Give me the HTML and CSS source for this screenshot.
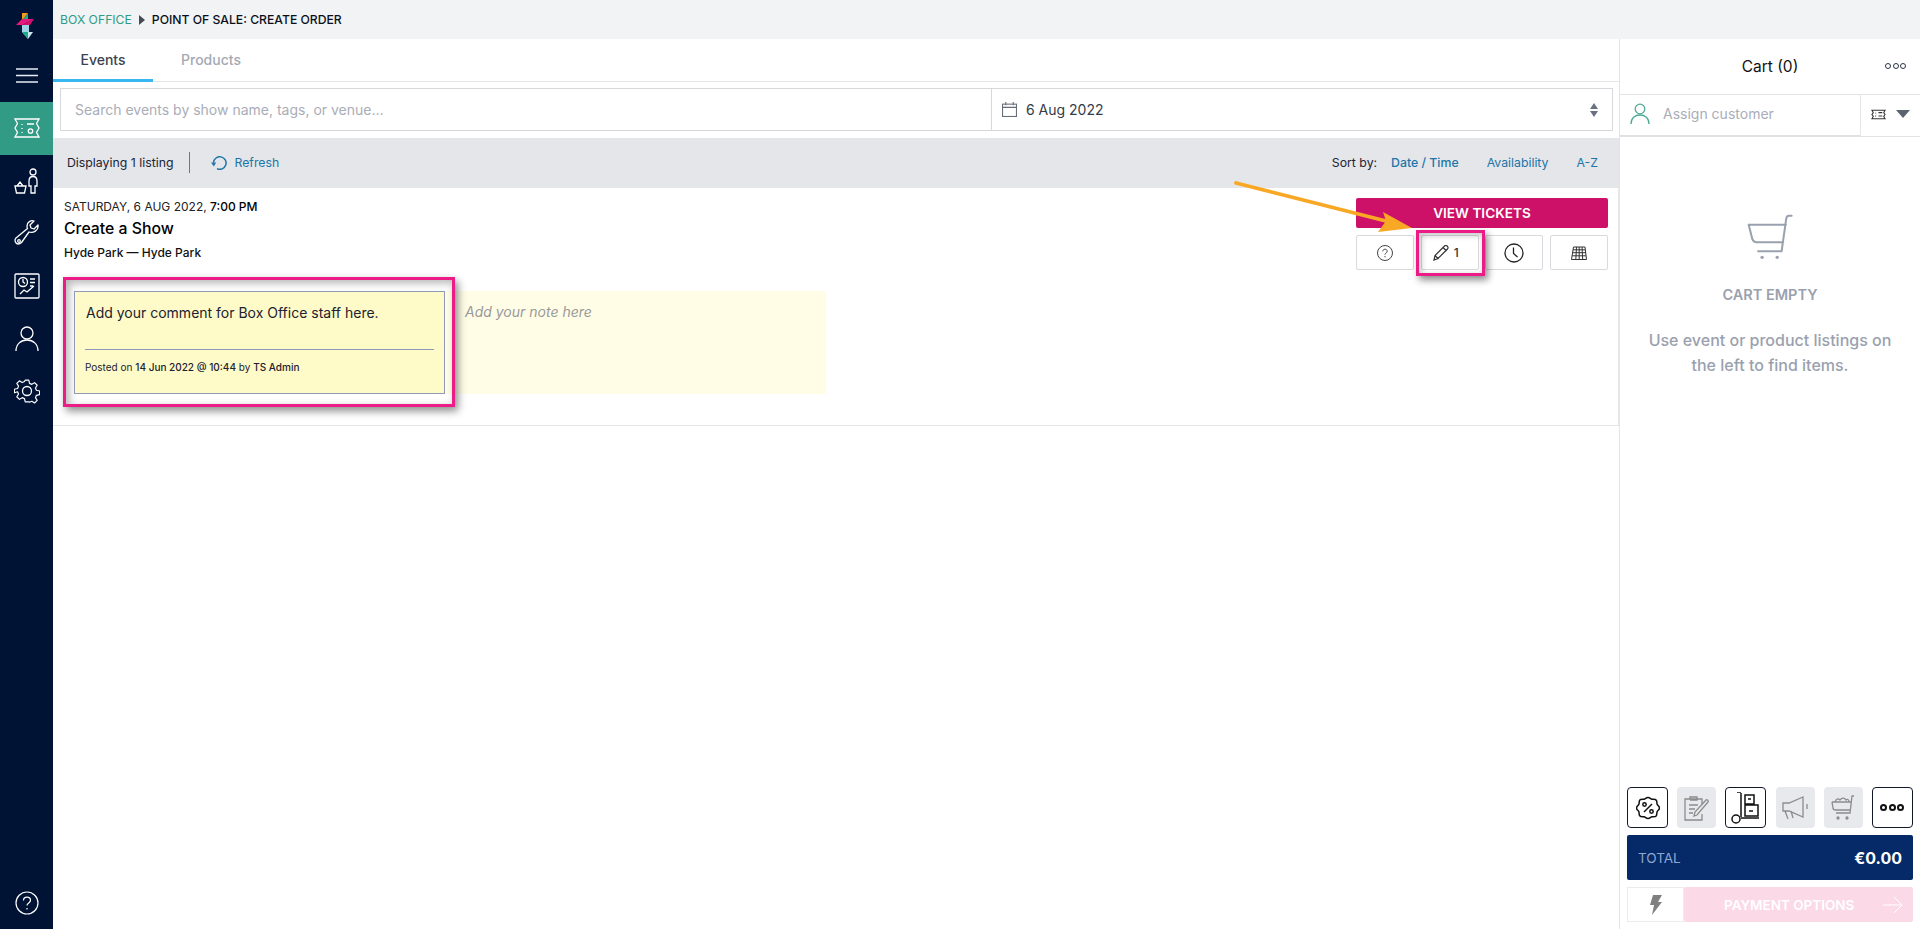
FILE: index.html
```html
<!DOCTYPE html>
<html lang="en">
<head>
<meta charset="utf-8">
<title>Point of Sale: Create Order</title>
<link rel="stylesheet" href="styles.css">
</head>
<body>
<div class="app">
  <nav class="side">
    <svg class="logo" viewBox="0 0 24 26" width="24" height="26">
      <polygon points="6,0 12,0 6,8" fill="#f59a1b"/>
      <polygon points="12,0 12,8 6,8" fill="#1fa98c"/>
      <polygon points="0,12 6,6 6,12" fill="#e8197d"/>
      <polygon points="6,6 18,6 6,12" fill="#e8197d"/>
      <polygon points="18,6 6,12 14,12" fill="#d5116f"/>
      <rect x="6" y="12" width="7" height="7" fill="#9fd3e6"/>
      <polygon points="6,19 17,19 12,26" fill="#c9e7f0"/>
      <polygon points="6,19 12,19 12,26" fill="#1fa98c"/>
    </svg>
    <svg class="burger" viewBox="0 0 22 15" width="22" height="15"><path d="M0 1h22M0 7.500h22M0 14h22" stroke="#e8edf5" stroke-width="1.400" fill="none"/></svg>
    <a class="nav-item active">
      <svg viewBox="0 0 26 20" width="26" height="20" fill="none" stroke="#fff" stroke-width="1.300"><path d="M1 1h24l-2.500 4.500 2.500 4.500-2.500 4.500 2.500 4.500H1l2.500-4.500L1 10l2.500-4.500z"/><path d="M8 6v1M8 10v1M8 14v1M13 6h7"/><circle cx="16.500" cy="13" r="2.200"/></svg>
    </a>
    <a class="nav-item">
      <svg viewBox="0 0 26 26" width="26" height="26" fill="none" stroke="#fff" stroke-width="1.300"><circle cx="19" cy="4" r="3"/><path d="M15 18v-5c0-3 2-4.500 4-4.500s4 1.500 4 4.500v5h-2v7h-4v-7zM1 18h11l-1.500 7h-8zM3 18l3-4 3 4"/></svg>
    </a>
    <a class="nav-item">
      <svg viewBox="0 0 26 26" width="26" height="26" fill="none" stroke="#fff" stroke-width="1.300" stroke-linejoin="round"><path d="M24 5l-4 4-3-1-1-3 4-4c-3-1-7 1-7 5 0 1 0 2 .500 2.500L2 18c-2 2-.5 6 2 6 1.500 0 2.500-.5 3.500-1.500L15 12c4 1.500 10-1.500 9-7z"/><circle cx="5" cy="21" r="1.300"/></svg>
    </a>
    <a class="nav-item">
      <svg viewBox="0 0 26 26" width="26" height="26" fill="none" stroke="#fff" stroke-width="1.300"><rect x="1" y="1" width="24" height="24" rx="1"/><circle cx="9" cy="9" r="4.500"/><path d="M9 6v3l2 1.500M16 6h5M16 9.500h5M16 13h3M6 21l4-4 3 2 7-6" /></svg>
    </a>
    <a class="nav-item">
      <svg viewBox="0 0 24 26" width="24" height="26" fill="none" stroke="#fff" stroke-width="1.300"><circle cx="12" cy="7" r="6"/><path d="M1 25c0-7 5-11 11-11s11 4 11 11"/></svg>
    </a>
    <a class="nav-item">
      <svg viewBox="0 0 26 26" width="26" height="26" fill="none" stroke="#fff" stroke-width="1.300" stroke-linejoin="round"><circle cx="13" cy="13" r="4.500"/><path d="M11 1h4l.8 3.500 2.600 1.100 3-1.900 2.900 2.900-1.900 3 1.100 2.600 3.500.8v4l-3.500.8-1.100 2.600 1.900 3-2.900 2.900-3-1.900-2.600 1.100L15 25h-4l-.8-3.500-2.600-1.100-3 1.900-2.900-2.900 1.900-3-1.100-2.600L-1 15v-4l3.500-.8 1.100-2.600-1.900-3 2.900-2.900 3 1.900 2.600-1.100z" transform="translate(1.300 1.300) scale(.9)"/></svg>
    </a>
    <svg class="help" viewBox="0 0 24 24" width="24" height="24" fill="none" stroke="#fff" stroke-width="1.200"><circle cx="12" cy="12" r="11"/><path d="M8.500 9.500c0-2 1.500-3.300 3.500-3.300s3.500 1.300 3.500 3.100c0 2.800-3.500 2.500-3.500 5.200M12 17v1.500"/></svg>
  </nav>

  <div class="body">
    <header class="crumbs">
      <span class="crumb-link">BOX OFFICE</span>
      <span class="crumb-caret"></span>
      <span class="crumb-here">POINT OF SALE: CREATE ORDER</span>
    </header>
    <div class="work">
      <main class="main">
        <div class="tabs">
          <div class="tab on">Events</div>
          <div class="tab">Products</div>
        </div>
        <div class="filters">
          <div class="search-box">
            <div class="search">Search events by show name, tags, or venue...</div>
            <div class="date">
              <svg viewBox="0 0 14 14" width="15" height="15" fill="none" stroke="#666d78" stroke-width="1"><rect x=".5" y="2" width="13" height="11.500"/><path d="M.5 5h13M3.500 0v3M10.500 0v3"/></svg>
              <span>6 Aug 2022</span>
              <span class="spin"><i class="up"></i><i class="down"></i></span>
            </div>
          </div>
        </div>
        <div class="toolbar">
          <span class="count">Displaying 1 listing</span>
          <span class="vbar"></span>
          <svg class="refresh" viewBox="0 0 16 16" width="16" height="16" fill="none" stroke="#1d75a8" stroke-width="1.500"><path d="M2.500 8.500A6.300 6.300 0 1 1 6 14.700"/><path d="M0 8.500h5.200L2.800 12.500z" fill="#1d75a8" stroke="none"/></svg>
          <span class="link">Refresh</span>
          <span class="sort">Sort by:</span>
          <span class="link strong">Date / Time</span>
          <span class="link">Availability</span>
          <span class="link">A-Z</span>
        </div>
        <article class="event">
          <div class="event-top">
            <div class="event-info">
              <div class="when">SATURDAY, 6 AUG 2022, <b>7:00 PM</b></div>
              <h2 class="title">Create a Show</h2>
              <div class="venue">Hyde Park — Hyde Park</div>
            </div>
            <div class="actions">
              <button class="view">VIEW TICKETS</button>
              <div class="mini-row">
                <button class="mini">
                  <svg viewBox="0 0 16 16" width="16" height="16" fill="none" stroke="#444" stroke-width="1"><circle cx="8" cy="8" r="7.500"/><path d="M5.800 6.300c0-1.300 1-2.100 2.200-2.100s2.200.8 2.200 2c0 1.800-2.200 1.600-2.200 3.400M8 11v1.300"/></svg>
                </button>
                <button class="mini marked">
                  <svg viewBox="0 0 16 16" width="16" height="16" fill="none" stroke="#333" stroke-width="1.200"><path d="M1 15l1-4.500L11.500 1c1-.8 2-.6 2.800.2s1 1.800.2 2.800L5 13.500zM2 10.500L5.500 14M10 2.500L13.500 6"/></svg>
                  <span>1</span>
                </button>
                <button class="mini">
                  <svg viewBox="0 0 20 20" width="20" height="20" fill="none" stroke="#222" stroke-width="1.300"><circle cx="10" cy="10" r="9"/><path d="M9.500 4.500v6l4 3.500"/></svg>
                </button>
                <button class="mini">
                  <svg viewBox="0 0 16 14" width="16" height="14" fill="none" stroke="#333" stroke-width="1"><path d="M2.500 1h11.500l1.500 12.500H.5zM2 3.800h12.500M1.600 6.700h13.200M1.200 9.800h13.900M5.500 1l-.7 12.500M8.200 1v12.500M11 1l.7 12.500"/></svg>
                </button>
              </div>
            </div>
          </div>
          <div class="notes">
            <div class="comment">
              <p class="comment-text">Add your comment for Box Office staff here.</p>
              <div class="comment-meta">Posted on <b>14 Jun 2022 @ 10:44</b> by <b>TS Admin</b></div>
            </div>
            <div class="note">Add your note here</div>
          </div>
          <div class="mark mark-comment"></div>
        </article>
      </main>

      <aside class="cart">
        <div class="cart-head">
          <span>Cart (0)</span>
          <span class="dots"><i></i><i></i><i></i></span>
        </div>
        <div class="assign">
          <div class="assign-name">
            <svg viewBox="0 0 20 21" width="20" height="21" fill="none" stroke="#4fa996" stroke-width="1.300"><circle cx="10" cy="6" r="4.800"/><path d="M1 21c0-6 4-9 9-9s9 3 9 9"/></svg>
            <span>Assign customer</span>
          </div>
          <div class="assign-type">
            <svg viewBox="0 0 16 11" width="15" height="11" fill="none" stroke="#333" stroke-width="1.100"><path d="M1 1h14l-1.500 2.500L15 5.500l-1.500 2L15 10H1l1.500-2.500L1 5.500l1.500-2z"/><path d="M5 3.500v1M5 6.500v1M8 3.500h4M8 7h4"/></svg>
            <i class="caret-down"></i>
          </div>
        </div>
        <div class="empty">
          <svg viewBox="200 70 140 140" width="47" height="47" fill="none" stroke="#9aa1ae" stroke-width="6" stroke-linecap="round" stroke-linejoin="round"><path d="M333 78h-8c-5 0-7 3-8 8L303 184H233M205 105H316M205 105l11 43c2 6 6 9 12 9h80"/><circle cx="245" cy="202" r="5" fill="#9aa1ae" stroke="none"/><circle cx="290" cy="202" r="5" fill="#9aa1ae" stroke="none"/></svg>
          <h3>CART EMPTY</h3>
          <p>Use event or product listings on the left to find items.</p>
        </div>
        <div class="tools">
          <button class="tool live">
            <svg viewBox="0 0 24 24" width="24" height="24" fill="none" stroke="#111" stroke-width="1.500"><path d="M12 1.500c2 0 2.500 1.500 4 1.700s3.200-.4 4.300 1 .2 2.800.9 4.200 2.300 1.700 2.300 3.600-1.600 2.200-2.300 3.600-.1 2.900-.9 4.200-2.800.8-4.300 1S14 22.500 12 22.500s-2.500-1.500-4-1.700-3.200.4-4.300-1-.2-2.800-.9-4.200S.5 13.900.5 12s1.600-2.200 2.300-3.600.1-2.900.9-4.200 2.800-.8 4.300-1S10 1.500 12 1.500z"/><path d="M16 8l-8 8"/><circle cx="8.500" cy="8.500" r="1.700"/><circle cx="15.500" cy="15.500" r="1.700"/></svg>
          </button>
          <button class="tool off">
            <svg viewBox="0 0 26 26" width="26" height="26" fill="none" stroke="#8c8c8c" stroke-width="1.300"><path d="M18 10V4H1v21h17v-6M6 4V2h7v3H6M5 10h9M5 14h6M5 18h4M10 21l1-4L22 5c1-1 3 1 2 2L13 20z"/></svg>
          </button>
          <button class="tool live">
            <svg viewBox="0 0 30 32" width="30" height="32" fill="none" stroke="#111" stroke-width="1.500"><path d="M10 1v24M10 26h18M6 0h4"/><circle cx="5" cy="27" r="4"/><path d="M14 3h9v9h-9zM14 13h13v11H14z"/><path d="M17 7h3M18 19h4"/></svg>
          </button>
          <button class="tool off">
            <svg viewBox="0 0 28 24" width="28" height="24" fill="none" stroke="#8c8c8c" stroke-width="1.300"><path d="M22 1L8 7H2v8h6l14 6zM4 15l3 8M10 15l2 7M26 8v5"/></svg>
          </button>
          <button class="tool off">
            <svg viewBox="0 0 24 26" width="24" height="26" fill="none" stroke="#8c8c8c" stroke-width="1.300"><path d="M23 1h-2l-2 17H5M1 7h19M1 7l1 6c0 2 2 2 3 2h14M4 7c1-3 3-4 5-2 2-3 5-2 6 0 1-1 3-1 3 2"/><circle cx="7" cy="23" r="1" fill="#8c8c8c"/><circle cx="16" cy="23" r="1" fill="#8c8c8c"/></svg>
          </button>
          <button class="tool live">
            <span class="dots big"><i></i><i></i><i></i></span>
          </button>
        </div>
        <div class="total"><span>TOTAL</span><b>€0.00</b></div>
        <div class="pay-row">
          <div class="flash">
            <svg viewBox="0 0 12 20" width="12" height="20"><path d="M3 0h9L8 7h4L2 20l2-10H0z" fill="#808080"/></svg>
          </div>
          <button class="pay">
            <span>PAYMENT OPTIONS</span>
            <svg viewBox="0 0 20 18" width="20" height="18" fill="none" stroke="#fff" stroke-width="1"><path d="M0 9h19M11 1l8 8-8 8"/></svg>
          </button>
        </div>
      </aside>
    </div>
  </div>
  <svg class="pointer" viewBox="0 0 200 70" width="200" height="70" fill="#f9a825">
    <path d="M2 5L152 43" stroke="#f9a825" stroke-width="3.800" stroke-linecap="round"/>
    <path d="M178 50L144 54 152 43 149 34z"/>
  </svg>
</div>
</body>
</html>
```
FILE: styles.css
```css
* { box-sizing: border-box; }
html, body { margin: 0; height: 100%; }
body { font-family: Inter, "Liberation Sans", sans-serif; color: #111; background: #fff; overflow: hidden; }
button { font-family: inherit; cursor: pointer; }

.app { position: relative; display: flex; height: 929px; }

.side { width: 53px; flex: none; background: #001335; display: flex; flex-direction: column; align-items: center; padding-top: 13px; }
.logo { display: block; margin-left: 3px; }
.burger { display: block; margin-top: 29px; margin-bottom: 19px; }
.nav-item { width: 100%; height: 52.600px; display: flex; align-items: center; justify-content: center; flex: none; }
.nav-item.active { background: #329b85; }
.help { margin-top: auto; margin-bottom: 14px; }

.body { flex: 1; min-width: 0; display: flex; flex-direction: column; }
.crumbs { height: 39px; flex: none; background: #f1f3f5; display: flex; align-items: center; padding-left: 7px; font-size: 12.200px; }
.crumb-link { color: #2f9b85; }
.crumb-caret { width: 0; height: 0; border-left: 6px solid #444b57; border-top: 5px solid transparent; border-bottom: 5px solid transparent; margin: 0 7px 0 7px; }
.crumb-here { font-weight: 500; color: #0b0f1a; }

.work { flex: 1; min-height: 0; display: flex; }
.main { flex: 1; min-width: 0; display: flex; flex-direction: column; }

.tabs { height: 43px; flex: none; display: flex; border-bottom: 1px solid #e5e7ea; }
.tab { width: 100px; padding-top: 12px; text-align: center; font-size: 14px; font-weight: 500; color: #a5a9b3; }
.tab.on { color: #3c4350; border-bottom: 3px solid #38b6f0; height: 43px; margin-right: 0; }
.tab + .tab { margin-left: 8px; width: 100px; }

.filters { height: 56px; flex: none; padding: 6px 6px 7px 7px; }
.search-box { height: 43px; display: flex; border: 1px solid #d6d8db; }
.search { width: 931px; flex: none; border-right: 1px solid #d6d8db; padding-left: 14px; display: flex; align-items: center; font-size: 14px; color: #a9adb8; }
.date { flex: 1; display: flex; align-items: center; gap: 9px; padding-left: 10px; padding-right: 14px; font-size: 14px; color: #333b48; }
.spin { margin-left: auto; display: flex; flex-direction: column; gap: 2px; }
.spin i { display: block; width: 0; height: 0; border-left: 4.500px solid transparent; border-right: 4.500px solid transparent; }
.spin .up { border-bottom: 6px solid #6a7180; }
.spin .down { border-top: 6px solid #6a7180; }

.toolbar { height: 50px; flex: none; background: #e4e6ea; display: flex; align-items: center; font-size: 12.300px; padding: 0 21px 2px 14px; }
.count { color: #1c2433; }
.vbar { width: 1px; height: 21px; background: #6f7480; margin: 0 14px 0 16px; }
.refresh { margin: 0 7px 0 7px; }
.link { color: #1d75a8; }
.link.strong { font-weight: 500; }
.sort { margin-left: auto; margin-right: 14px; color: #1c2433; }
.toolbar .link + .link { margin-left: 28px; }

.event { position: relative; height: 238px; flex: none; border-bottom: 1px solid #e6e6e6; border-right: 1px solid #e6e6e6; }
.event-top { display: flex; justify-content: space-between; padding: 10px 10px 0 11px; height: 103px; }
.when { font-size: 12px; line-height: 16px; color: #222; margin-top: 1px; }
.when b { font-weight: 500; color: #000; }
.title { margin: 4px 0 0; font-size: 15.800px; line-height: 20px; font-weight: 500; color: #000; }
.venue { margin-top: 6px; font-size: 12px; line-height: 16px; font-weight: 500; color: #111; }

.actions { width: 252px; }
.view { display: block; width: 100%; height: 30px; border: 0; border-radius: 2px; background: #cd1068; color: #fff; font-size: 13.600px; font-weight: 600; }
.mini-row { display: flex; justify-content: space-between; margin-top: 7px; }
.mini { width: 58px; height: 35px; padding: 0; background: #fff; border: 1px solid #d8dadd; border-radius: 2px; display: flex; align-items: center; justify-content: center; gap: 5px; font-size: 12px; font-weight: 500; color: #333; }
.mini.marked { position: relative; padding-right: 8px; }
.mini.marked::after { content: ""; position: absolute; left: -6px; top: -6px; right: -7px; bottom: -7px; border: 3px solid #ec1c87; box-shadow: 3px 4px 7px rgba(0,0,0,.45), inset 2px 2px 6px rgba(0,0,0,.25); }

.notes { display: flex; padding-left: 21px; height: 103px; }
.comment { width: 371px; flex: none; border: 1px solid #8f9ab8; background: #fffbc8; padding: 10px 10px 0 11px; position: relative; z-index: 3; }
.comment-text { margin: 0; font-size: 14px; line-height: 22px; color: #1b2130; height: 47px; }
.comment-meta { border-top: 1px solid #8f9ab8; margin-left: -1px; padding-top: 11px; font-size: 10px; line-height: 12px; color: #1b2130; }
.comment-meta b { font-weight: 500; }
.note { width: 381px; flex: none; background: #fffde6; padding: 11px 20px; font-size: 14px; line-height: 20px; font-style: italic; color: #9a9a9a; }
.mark { position: absolute; pointer-events: none; }
.mark-comment { left: 10px; top: 89px; width: 392px; height: 130px; border: 3px solid #ec1c87; box-shadow: 3px 4px 8px rgba(0,0,0,.45), inset 3px 3px 8px rgba(0,0,0,.3); z-index: 2; }

.cart { width: 301px; flex: none; border-left: 1px solid #e3e4e7; display: flex; flex-direction: column; }
.cart-head { height: 56px; flex: none; display: flex; align-items: center; justify-content: center; position: relative; font-size: 15.500px; color: #111; border-bottom: 1px solid #e1e3e7; }
.dots { display: inline-flex; gap: 1.500px; }
.dots i { display: block; width: 6px; height: 6px; border: 1.800px solid #2c3448; border-radius: 50%; }
.cart-head .dots { position: absolute; right: 14px; top: 24px; }
.assign { height: 42px; flex: none; display: flex; }
.assign-name { width: 240px; display: flex; align-items: center; gap: 13px; padding: 0 0 3px 10px; border-bottom: 2px solid #dfe1e5; font-size: 14px; color: #a9adb8; }
.assign-type { flex: 1; display: flex; align-items: center; gap: 10px; padding: 0 0 3px 10px; border-left: 1px solid #e6e7ea; border-bottom: 1px solid #e1e3e7; }
.caret-down { width: 0; height: 0; border-left: 7px solid transparent; border-right: 7px solid transparent; border-top: 8px solid #5b6270; }

.empty { flex: 1; display: flex; flex-direction: column; align-items: center; padding-top: 76px; color: #9aa1ae; text-align: center; }
.empty svg { display: block; }
.empty h3 { margin: 25px 0 0; font-size: 14.500px; line-height: 20px; font-weight: 600; }
.empty p { margin: 23px 0 0; width: 260px; font-size: 16px; line-height: 25px; font-weight: 500; }

.tools { display: flex; justify-content: space-between; padding: 0 7px; flex: none; }
.tool { width: 41px; height: 41px; padding: 0; border-radius: 4px; display: flex; align-items: center; justify-content: center; background: #fff; border: 1.500px solid #12192b; }
.tool.off { width: 39px; background: #e7e9ec; border: 0; }
.dots.big i { width: 7px; height: 7px; border-color: #111; border-width: 2px; }

.total { margin: 7px 7px 0; height: 45px; flex: none; background: #062a68; border-radius: 2px; display: flex; align-items: center; justify-content: space-between; padding: 0 11px; font-size: 13.500px; color: #8fa6cf; }
.total b { font-size: 16px; font-weight: 700; color: #fff; }

.pay-row { margin: 7px; height: 35px; flex: none; display: flex; }
.flash { width: 57px; border: 1px solid #ececef; display: flex; align-items: center; justify-content: center; }
.pay { flex: 1; border: 0; border-radius: 2px; background: #fbd9e7; color: #fff; font-size: 13.500px; font-weight: 600; display: flex; align-items: center; justify-content: space-between; padding: 0 10px 0 40px; }

.pointer { position: absolute; left: 1234px; top: 178px; pointer-events: none; z-index: 5; }
```
